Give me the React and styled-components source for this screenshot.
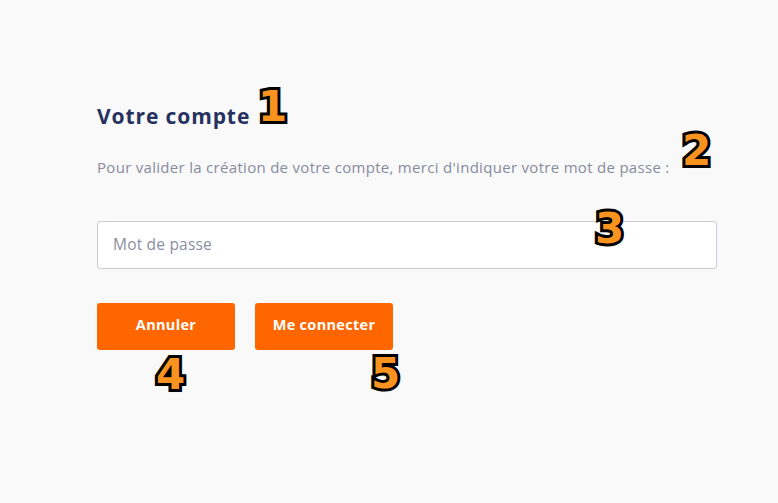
import React from "react";
import styled, { createGlobalStyle } from "styled-components";

const Global = createGlobalStyle`
  html, body { margin: 0; padding: 0; background: #f9f9f9; }
  body { font-family: "Open Sans", sans-serif; }
`;

const Page = styled.div`
  position: relative;
  width: 778px;
  height: 503px;
  box-sizing: border-box;
  padding: 101px 61px 0 97px;
  background: #f9f9f9;
`;

const Title = styled.h1`
  margin: 0;
  font-size: 21px;
  font-weight: 700;
  letter-spacing: 0.9px;
  color: #26315f;
  line-height: 30px;
`;

const Intro = styled.p`
  margin: 26px 0 0;
  font-size: 15px;
  letter-spacing: 0.3px;
  color: #878b9c;
  line-height: 20px;
`;

const Input = styled.input`
  display: block;
  margin-top: 44px;
  width: 100%;
  height: 48px;
  box-sizing: border-box;
  border: 1px solid #c9cbd9;
  border-radius: 3px;
  background: #fff;
  padding: 0 15px 2px;
  font-family: inherit;
  font-size: 15.5px;
  letter-spacing: 0.2px;
  color: #333;
  outline: none;
  &::placeholder { color: #8a8e9f; }
`;

const Actions = styled.div`
  display: flex;
  gap: 20px;
  margin-top: 34px;
`;

const Button = styled.button`
  width: 138px;
  height: 47px;
  border: none;
  border-radius: 3px;
  background: #ff6600;
  color: #fff;
  font-family: inherit;
  font-weight: 700;
  font-size: 14.5px;
  letter-spacing: 0.3px;
  padding: 0 0 4px;
  cursor: pointer;
`;

const Marker = styled.span`
  position: absolute;
  left: ${(p) => p.x}px;
  top: ${(p) => p.y}px;
  font-family: "DejaVu Sans", sans-serif;
  font-weight: 700;
  font-size: 42px;
  line-height: 44px;
  color: #f7931e;
  -webkit-text-stroke: 6px #000;
  paint-order: stroke fill;
  text-shadow: 1px 2px 2px rgba(0,0,0,0.35);
`;

export default function App() {
  return (
    <>
      <Global />
      <Page>
        <Title>Votre compte</Title>
        <Intro>
          Pour valider la création de votre compte, merci d'indiquer votre mot de passe :
        </Intro>
        <Input type="password" placeholder="Mot de passe" />
        <Actions>
          <Button>Annuler</Button>
          <Button>Me connecter</Button>
        </Actions>
        <Marker x={258} y={85}>1</Marker>
        <Marker x={682} y={129}>2</Marker>
        <Marker x={595} y={207}>3</Marker>
        <Marker x={156} y={353}>4</Marker>
        <Marker x={371} y={352}>5</Marker>
      </Page>
    </>
  );
}
